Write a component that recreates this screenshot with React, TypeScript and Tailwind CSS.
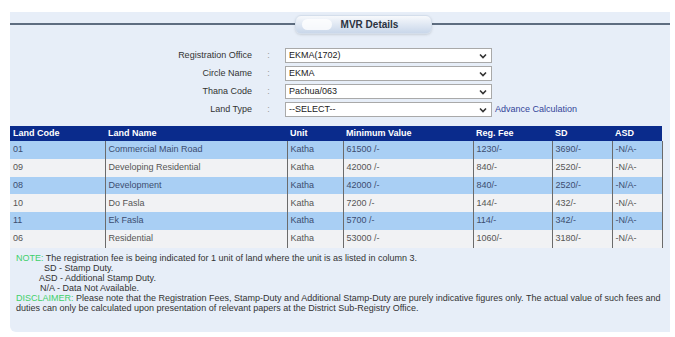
import React from 'react';

const rows = [
  { code: '01', name: 'Commercial Main Road', unit: 'Katha', min: '61500 /-', fee: '1230/-', sd: '3690/-', asd: '-N/A-' },
  { code: '09', name: 'Developing Residential', unit: 'Katha', min: '42000 /-', fee: '840/-', sd: '2520/-', asd: '-N/A-' },
  { code: '08', name: 'Development', unit: 'Katha', min: '42000 /-', fee: '840/-', sd: '2520/-', asd: '-N/A-' },
  { code: '10', name: 'Do Fasla', unit: 'Katha', min: '7200 /-', fee: '144/-', sd: '432/-', asd: '-N/A-' },
  { code: '11', name: 'Ek Fasla', unit: 'Katha', min: '5700 /-', fee: '114/-', sd: '342/-', asd: '-N/A-' },
  { code: '06', name: 'Residential', unit: 'Katha', min: '53000 /-', fee: '1060/-', sd: '3180/-', asd: '-N/A-' }
];

const fields = [
  { label: 'Registration Office', value: 'EKMA(1702)' },
  { label: 'Circle Name', value: 'EKMA' },
  { label: 'Thana Code', value: 'Pachua/063' },
  { label: 'Land Type', value: '--SELECT--', link: true }
];

function Chevron() {
  return (
    <svg width="8" height="6" viewBox="0 0 8 6" className="shrink-0">
      <path d="M1 1.5 L4 4.5 L7 1.5" fill="none" stroke="#333" strokeWidth="1.6" />
    </svg>
  );
}

export default function App() {
  return (
    <div className="w-[675px] h-[337px] bg-white pt-[12px] pl-[10px] pr-[5px] font-['Liberation_Sans',Arial,sans-serif]">
      <div className="h-[320px] bg-[#e7eef8] rounded-bl-md flex flex-col">
        {/* title bar */}
        <div className="flex items-center h-[22px] mt-[1px]">
          <div className="w-[285px] h-[2px] bg-[#5e6d80]" />
          <div className="relative overflow-hidden w-[137px] h-[19px] rounded-md bg-gradient-to-b from-[#f7f9fc] to-[#c9d7ea] border border-[#d4deeb] shadow-sm flex items-center justify-center">
            <div className="absolute left-[6px] top-[3px] w-[30px] h-[11px] rounded-full bg-white/80" />
            <span className="relative text-[10px] font-bold text-[#2a3240] pl-[12px]">MVR Details</span>
          </div>
          <div className="flex-1 h-[2px] bg-[#5e6d80]" />
        </div>

        {/* form */}
        <div className="flex flex-col gap-[3px] mt-[13px]">
          {fields.map((f) => (
            <div key={f.label} className="flex items-center h-[15px] text-[9px]">
              <div className="w-[242px] text-right text-[#333]">{f.label}</div>
              <div className="w-[33px] text-center text-[#999]">:</div>
              <div className="w-[207px] h-[15px] bg-white border border-[#a9a9a9] flex items-center justify-between pl-[3px] pr-[4px] text-[#222]">
                <span>{f.value}</span>
                <Chevron />
              </div>
              {f.link && <span className="ml-[3px] text-[#33449a]">Advance Calculation</span>}
            </div>
          ))}
        </div>

        {/* table */}
        <table className="mt-[9px] w-[652px] table-fixed border-collapse text-[9px]">
          <colgroup>
            <col className="w-[95px]" />
            <col className="w-[182px]" />
            <col className="w-[56px]" />
            <col className="w-[130px]" />
            <col className="w-[79px]" />
            <col className="w-[60px]" />
            <col className="w-[50px]" />
          </colgroup>
          <thead>
            <tr className="h-[15px] bg-[#0a2b8c] text-white text-left">
              {['Land Code', 'Land Name', 'Unit', 'Minimum Value', 'Reg. Fee', 'SD', 'ASD'].map((h) => (
                <th key={h} className="font-bold px-[3px] py-0">{h}</th>
              ))}
            </tr>
          </thead>
          <tbody>
            {rows.map((r, i) => (
              <tr key={r.code} className={`h-[17.8px] ${i % 2 === 0 ? 'bg-[#a9cff4] text-[#3c4d70]' : 'bg-[#f1f2f4] text-[#555]'}`}>
                <td className="px-[3px]">{r.code}</td>
                <td className="px-[3px] border-l border-[#6b6b6b]">{r.name}</td>
                <td className="px-[3px] border-l border-[#6b6b6b]">{r.unit}</td>
                <td className="px-[3px] border-l border-[#6b6b6b]">{r.min}</td>
                <td className="px-[3px] border-l border-[#6b6b6b]">{r.fee}</td>
                <td className="px-[3px] border-l border-[#6b6b6b]">{r.sd}</td>
                <td className="px-[3px] border-x border-[#6b6b6b]">{r.asd}</td>
              </tr>
            ))}
          </tbody>
        </table>

        {/* notes */}
        <div className="pt-[5px] pl-[6px] text-[9px] leading-[10px] text-[#333]">
          <div><span className="text-[#3fd06a]">NOTE:</span> The registration fee is being indicated for 1 unit of land where the unit is as listed in column 3.</div>
          <div className="pl-[28px]">SD - Stamp Duty.</div>
          <div className="pl-[23px]">ASD - Additional Stamp Duty.</div>
          <div className="pl-[24px]">N/A - Data Not Available.</div>
          <div><span className="text-[#3fd06a]">DISCLAIMER:</span> Please note that the Registration Fees, Stamp-Duty and Additional Stamp-Duty are purely indicative figures only. The actual value of such fees and</div>
          <div>duties can only be calculated upon presentation of relevant papers at the District Sub-Registry Office.</div>
        </div>
      </div>
    </div>
  );
}
